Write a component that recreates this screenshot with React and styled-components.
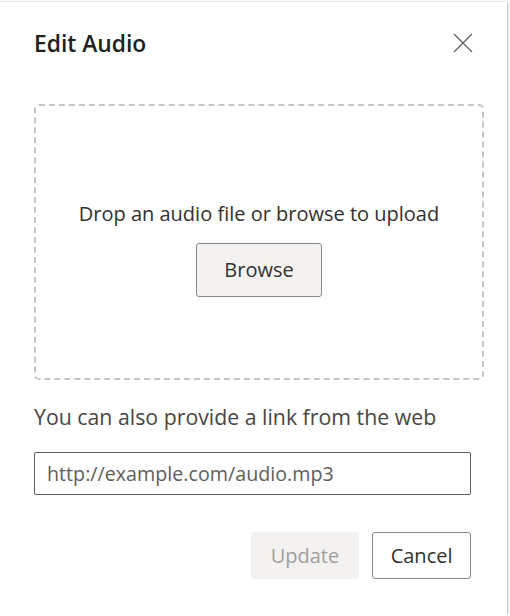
import React, { useState } from 'react';
import styled, { createGlobalStyle } from 'styled-components';

const GlobalStyle = createGlobalStyle`
  html, body {
    margin: 0;
    padding: 0;
    background: #ffffff;
  }
  body {
    font-family: "Open Sans", "Noto Sans", sans-serif;
    color: #323130;
  }
`;

const Dialog = styled.div`
  box-sizing: border-box;
  width: 507px;
  height: 612px;
  margin-top: 2px;
  background: #ffffff;
  box-shadow: 0 0 2px rgba(0, 0, 0, 0.25), 1px 1px 2px rgba(0, 0, 0, 0.2);
  padding: 26px 0 0 34px;
  display: flex;
  flex-direction: column;
`;

const Header = styled.div`
  width: 439px;
  display: flex;
  align-items: center;
  justify-content: space-between;
  height: 30px;
`;

const Title = styled.h2`
  margin: 0;
  font-size: 22.8px;
  font-weight: 600;
  color: #201f1e;
`;

const CloseButton = styled.button`
  border: none;
  background: none;
  padding: 0;
  width: 20px;
  height: 20px;
  display: flex;
  align-items: center;
  justify-content: center;
  cursor: pointer;
`;

const DropZone = styled.div`
  box-sizing: border-box;
  margin-top: 46px;
  width: 450px;
  height: 276px;
  border: 2px dashed #c8c6c4;
  border-radius: 5px;
  display: flex;
  flex-direction: column;
  align-items: center;
  justify-content: center;
  gap: 16px;
  padding-top: 12px;
`;

const DropText = styled.div`
  font-size: 20px;
  color: #323130;
`;

const Button = styled.button`
  box-sizing: border-box;
  height: ${(p) => p.$h || 47}px;
  padding: 0 ${(p) => p.$px || 18}px;
  font-family: inherit;
  font-size: 20px;
  border-radius: 3px;
  border: 1px solid ${(p) => (p.$disabled ? '#f3f2f1' : '#8a8886')};
  background: ${(p) => (p.$primary ? '#f3f2f1' : '#ffffff')};
  color: ${(p) => (p.$disabled ? '#a19f9d' : '#323130')};
  cursor: ${(p) => (p.$disabled ? 'default' : 'pointer')};
`;

const Hint = styled.p`
  margin: 22px 0 0;
  font-size: 21.3px;
  color: #484644;
`;

const UrlInput = styled.input`
  box-sizing: border-box;
  margin-top: 21px;
  width: 437px;
  height: 43px;
  padding: 0 12px;
  font-family: inherit;
  font-size: 19.7px;
  color: #323130;
  border: 1px solid #605e5c;
  border-radius: 2px;
  outline: none;
  &::placeholder {
    color: #605e5c;
  }
`;

const Footer = styled.div`
  margin-top: 37px;
  width: 437px;
  display: flex;
  justify-content: flex-end;
  gap: 13px;
`;

const App = () => {
  const [url, setUrl] = useState('');

  return (
    <>
      <GlobalStyle />
      <Dialog>
        <Header>
          <Title>Edit Audio</Title>
          <CloseButton aria-label="Close">
            <svg width="20" height="20" viewBox="0 0 20 20">
              <path d="M1 1 L19 19 M19 1 L1 19" stroke="#605e5c" strokeWidth="1.2" fill="none" />
            </svg>
          </CloseButton>
        </Header>

        <DropZone>
          <DropText>Drop an audio file or browse to upload</DropText>
          <Button $primary $h={54} $px={27}>Browse</Button>
        </DropZone>

        <Hint>You can also provide a link from the web</Hint>
        <UrlInput
          type="text"
          placeholder="http://example.com/audio.mp3"
          value={url}
          onChange={(e) => setUrl(e.target.value)}
        />

        <Footer>
          <Button $primary $disabled $px={19}>Update</Button>
          <Button $px={17.5}>Cancel</Button>
        </Footer>
      </Dialog>
    </>
  );
};

export default App;
